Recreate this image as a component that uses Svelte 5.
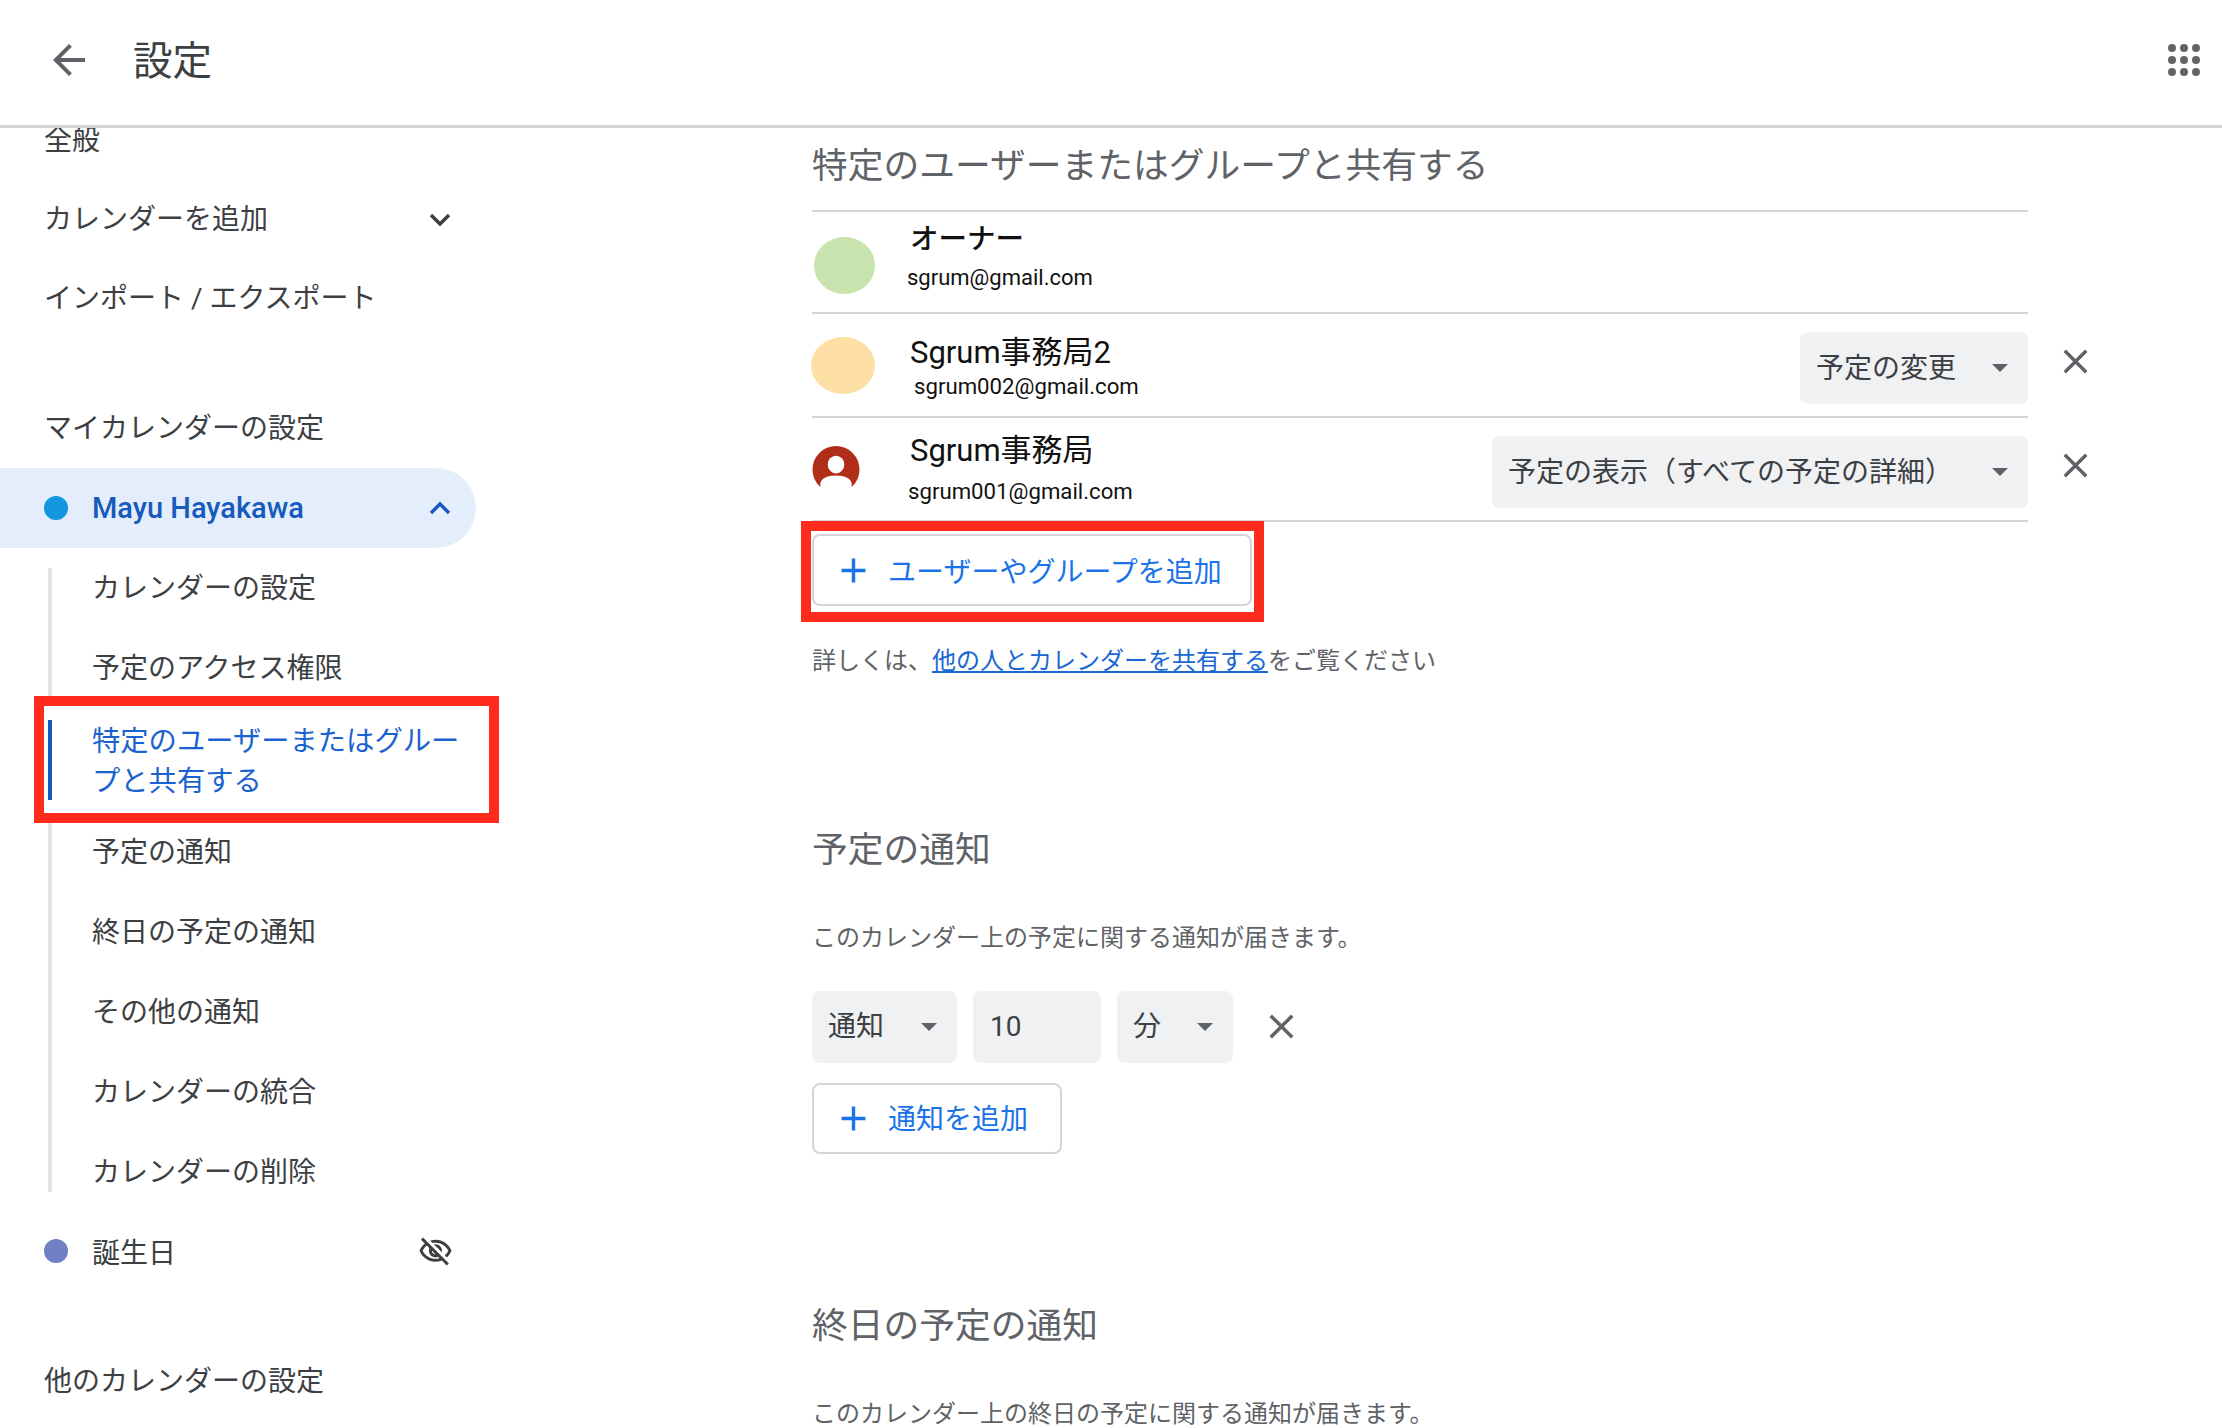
<script>
  const subItems = [
    { label: 'カレンダーの設定' },
    { label: '予定のアクセス権限' },
    { label: '特定のユーザーまたはグループと共有する', active: true },
    { label: '予定の通知' },
    { label: '終日の予定の通知' },
    { label: 'その他の通知' },
    { label: 'カレンダーの統合' },
    { label: 'カレンダーの削除' }
  ];
  const closePath = 'M19 6.41L17.59 5 12 10.59 6.41 5 5 6.41 10.59 12 5 17.59 6.41 19 12 13.41 17.59 19 19 17.59 13.41 12z';
  const addPath = 'M19 13h-6v6h-2v-6H5v-2h6V5h2v6h6v2z';
  const dots = [4, 16, 28];
</script>

<div class="page">
  <header class="topbar">
    <svg class="back" viewBox="0 0 24 24" aria-hidden="true"><path d="M20 11H7.83l5.59-5.59L12 4l-8 8 8 8 1.41-1.41L7.83 13H20v-2z" /></svg>
    <h1>設定</h1>
    <svg class="apps" viewBox="0 0 32 32" aria-hidden="true">
      {#each dots as y}
        {#each dots as x}
          <circle cx={x} cy={y} r="4" />
        {/each}
      {/each}
    </svg>
  </header>

  <div class="body">
    <nav class="side">
      <div class="nav-row">全般</div>
      <div class="nav-row add-cal">
        <span>カレンダーを追加</span>
        <svg class="chev" viewBox="0 0 24 16" aria-hidden="true"><path d="M3 3l9 9 9-9" /></svg>
      </div>
      <div class="nav-row">インポート / エクスポート</div>
      <div class="nav-row section-my">マイカレンダーの設定</div>
      <div class="nav-row cal current">
        <span class="dot blue"></span>
        <span class="cal-name">Mayu Hayakawa</span>
        <svg class="chev" viewBox="0 0 24 16" aria-hidden="true"><path d="M3 13l9-9 9 9" /></svg>
      </div>
      <ul class="sub">
        {#each subItems as item}
          <li class:active={item.active}>{item.label}</li>
        {/each}
      </ul>
      <div class="birthday">
        <span class="dot indigo"></span>
        <span>誕生日</span>
        <svg class="eye" viewBox="0 0 24 24" aria-hidden="true"><path d="M12 6c3.79 0 7.17 2.13 8.82 5.5-.59 1.22-1.42 2.27-2.41 3.12l1.41 1.41c1.39-1.23 2.49-2.77 3.18-4.53C21.27 7.11 17 4 12 4c-1.27 0-2.49.2-3.64.57l1.65 1.65C10.66 6.09 11.32 6 12 6zm-1.07 1.14L13 9.21c.57.25 1.03.71 1.28 1.28l2.07 2.07c.08-.34.14-.7.14-1.07C16.5 9.01 14.48 7 12 7c-.37 0-.72.05-1.07.14zM2.01 3.87l2.68 2.68C3.06 7.83 1.77 9.53 1 11.5 2.73 15.89 7 19 12 19c1.52 0 2.98-.29 4.32-.82l3.42 3.42 1.41-1.41L3.42 2.45 2.01 3.87zm7.5 7.5l2.61 2.61c-.04.01-.08.02-.12.02-1.38 0-2.5-1.12-2.5-2.5 0-.05.01-.08.01-.13zm-3.4-3.4l1.75 1.75c-.23.55-.36 1.15-.36 1.78 0 2.48 2.02 4.5 4.5 4.5.63 0 1.23-.13 1.77-.36l.98.98c-.88.24-1.8.38-2.75.38-3.79 0-7.17-2.13-8.82-5.5.7-1.43 1.72-2.61 2.93-3.53z" /></svg>
      </div>
      <div class="nav-row section-other">他のカレンダーの設定</div>
    </nav>

    <main class="content">
      <h2 class="h-share">特定のユーザーまたはグループと共有する</h2>
      <div class="people">
        <div class="person p1">
          <span class="avatar-slot"><span class="avatar green"></span></span>
          <div class="who">
            <div class="name owner">オーナー</div>
            <div class="mail">sgrum@gmail.com</div>
          </div>
        </div>
        <div class="person p2">
          <span class="avatar-slot"><span class="avatar yellow"></span></span>
          <div class="who">
            <div class="name">Sgrum事務局2</div>
            <div class="mail">sgrum002@gmail.com</div>
          </div>
          <div class="select perm w-change"><span>予定の変更</span><i class="caret"></i></div>
          <svg class="close" viewBox="0 0 24 24" aria-hidden="true"><path d={closePath} /></svg>
        </div>
        <div class="person p3">
          <span class="avatar-slot">
            <svg class="avatar-user" viewBox="0 0 48 48" aria-hidden="true">
              <circle cx="24" cy="24" r="24" fill="#b02e17" />
              <ellipse cx="24" cy="19" rx="8.5" ry="9" fill="#fff" />
              <path d="M8 48V39C8 33 15 30 24 30s16 3 16 9v9z" fill="#fff" />
            </svg>
          </span>
          <div class="who">
            <div class="name">Sgrum事務局</div>
            <div class="mail">sgrum001@gmail.com</div>
          </div>
          <div class="select perm w-view"><span>予定の表示（すべての予定の詳細）</span><i class="caret"></i></div>
          <svg class="close" viewBox="0 0 24 24" aria-hidden="true"><path d={closePath} /></svg>
        </div>
      </div>

      <button class="add add-user" type="button">
        <svg viewBox="0 0 24 24" aria-hidden="true"><path d={addPath} /></svg>
        <span>ユーザーやグループを追加</span>
      </button>

      <p class="help">詳しくは、<a href="#share">他の人とカレンダーを共有する</a>をご覧ください</p>

      <h2 class="h-notify">予定の通知</h2>
      <p class="desc">このカレンダー上の予定に関する通知が届きます。</p>
      <div class="notify-row">
        <div class="select w-type"><span>通知</span><i class="caret"></i></div>
        <div class="select w-num"><span class="num">10</span></div>
        <div class="select w-unit"><span>分</span><i class="caret"></i></div>
        <svg class="close" viewBox="0 0 24 24" aria-hidden="true"><path d={closePath} /></svg>
      </div>
      <button class="add add-notify" type="button">
        <svg viewBox="0 0 24 24" aria-hidden="true"><path d={addPath} /></svg>
        <span>通知を追加</span>
      </button>

      <h2 class="h-allday">終日の予定の通知</h2>
      <p class="desc">このカレンダー上の終日の予定に関する通知が届きます。</p>
    </main>
  </div>
</div>

<style>
  :global(body) {
    margin: 0;
    background: #fff;
  }
  .page {
    width: 2222px;
    height: 1428px;
    overflow: hidden;
    display: flex;
    flex-direction: column;
    font-family: Roboto, "Noto Sans CJK JP", sans-serif;
    color: #3c4043;
    font-size: 28px;
  }
  .topbar {
    flex: none;
    border-bottom: 3px solid #d3d4d7;
    display: flex;
    align-items: center;
    padding: 0 22px 5px 45px;
    box-sizing: content-box;
    height: 120px;
    background: #fff;
    position: relative;
    z-index: 2;
  }
  .back {
    width: 48px;
    height: 48px;
    fill: #5f6368;
  }
  h1 {
    margin: 3px 0 0 40px;
    font-size: 39.5px;
    font-weight: 400;
    line-height: 48px;
    color: #3c4043;
  }
  .apps {
    margin-left: auto;
    width: 32px;
    height: 32px;
    fill: #5f6368;
  }
  .body {
    flex: 1;
    min-height: 0;
    display: flex;
    overflow: hidden;
  }
  .side {
    flex: none;
    width: 520px;
    margin-top: -30.5px;
  }
  .nav-row {
    height: 80px;
    display: flex;
    align-items: center;
    padding-left: 44px;
    box-sizing: border-box;
    width: 476px;
    padding-right: 24px;
    justify-content: space-between;
  }
  .add-cal {
    height: 78.5px;
  }
  .add-cal .chev {
    margin-top: 6px;
  }
  .section-my {
    margin-top: 47.5px;
    height: 84.5px;
  }
  .section-other {
    margin-top: 68px;
  }
  .chev {
    width: 24px;
    height: 16px;
    fill: none;
    stroke: currentColor;
    stroke-width: 3.4;
  }
  .cal {
    justify-content: flex-start;
  }
  .current {
    height: 80px;
    background: #e3edfc;
    border-radius: 0 40px 40px 0;
    color: #185abc;
  }
  .current .chev {
    margin-left: auto;
  }
  .dot {
    flex: none;
    width: 24px;
    height: 24px;
    border-radius: 50%;
    margin-right: 24px;
  }
  .blue {
    background: #1296e0;
  }
  .indigo {
    background: #7080c4;
  }
  .cal-name {
    font-size: 29px;
    font-weight: 500;
  }
  .sub {
    list-style: none;
    margin: 20px 0 0 48px;
    padding: 0 0 0 40px;
    border-left: 4px solid #e3e4e8;
    display: flex;
    flex-direction: column;
    gap: 40px;
    width: 372px;
    box-sizing: content-box;
    line-height: 40px;
  }
  .sub li {
    height: 40px;
    line-height: 42.5px;
  }
  .sub li.active {
    height: 80px;
    margin: -8px 0;
    font-size: 28.3px;
    line-height: 40px;
    color: #1a62cf;
    position: relative;
    z-index: 1;
    box-sizing: border-box;
    padding-top: 1.5px;
  }
  .sub li.active::before {
    content: "";
    position: absolute;
    left: -58px;
    top: -24px;
    bottom: -23px;
    width: 465px;
    box-sizing: border-box;
    border: 10px solid #fe2a1c;
    background: #fff;
    z-index: -1;
  }
  .sub li.active::after {
    content: "";
    position: absolute;
    left: -44px;
    top: 0;
    bottom: 0;
    width: 4px;
    background: #185abc;
  }
  .birthday {
    margin-top: 39px;
    height: 40px;
    display: flex;
    align-items: center;
    padding-left: 44px;
  }
  .eye {
    width: 35px;
    height: 35px;
    fill: #3c4043;
    margin-left: auto;
    margin-right: 67px;
  }
  .content {
    flex: none;
    width: 1216px;
    margin-left: 292px;
    padding-top: 13.5px;
  }
  h2 {
    margin: 0;
    font-size: 35.75px;
    line-height: 48px;
    font-weight: 400;
    color: #5f6368;
  }
  .h-share {
    margin-bottom: 20.5px;
  }
  .people {
    border-top: 2px solid #d4d5da;
  }
  .person {
    display: flex;
    align-items: flex-start;
    border-bottom: 2px solid #d4d5da;
    height: 102px;
    box-sizing: border-box;
  }
  .person.p2,
  .person.p3 {
    height: 104px;
  }
  .avatar-slot {
    flex: none;
    width: 100px;
    display: block;
  }
  .avatar {
    display: block;
    border-radius: 50%;
  }
  .avatar.green {
    width: 61px;
    height: 57px;
    margin: 25px 0 0 2px;
    background: #c8e4ae;
  }
  .avatar.yellow {
    width: 64px;
    height: 57px;
    margin: 23px 0 0 -1px;
    background: #fedfa5;
  }
  .avatar-user {
    display: block;
    width: 48px;
    height: 47px;
    margin-top: 28px;
  }
  .name {
    font-size: 31px;
    line-height: 36px;
    color: #111;
    font-weight: 400;
    margin-left: -2px;
  }
  .name.owner {
    font-size: 28.5px;
    font-weight: 500;
  }
  .mail {
    font-size: 22px;
    line-height: 30px;
    color: #111;
  }
  .p1 .who {
    padding-top: 10px;
  }
  .p1 .mail {
    margin: 5px 0 0 -5px;
  }
  .p2 .who {
    padding-top: 21px;
  }
  .p2 .mail {
    margin: 0 0 0 2px;
    font-size: 22.2px;
  }
  .p3 .who {
    padding-top: 14.5px;
  }
  .p3 .mail {
    margin: 7.5px 0 0 -4px;
    font-size: 22.2px;
  }
  .select {
    flex: none;
    height: 72px;
    box-sizing: border-box;
    background: #f0f1f3;
    border-radius: 8px;
    display: flex;
    align-items: center;
    justify-content: space-between;
    padding: 0 20px 0 16px;
  }
  .select span {
    margin-top: -5px;
  }
  .select span.num {
    margin-top: 0;
  }
  .caret {
    flex: none;
    width: 0;
    height: 0;
    border-left: 8px solid transparent;
    border-right: 8px solid transparent;
    border-top: 8px solid #5f6368;
  }
  .perm {
    margin: 18px 0 0 auto;
  }
  .w-change {
    width: 228px;
  }
  .w-view {
    width: 536px;
  }
  .close {
    flex: none;
    width: 41px;
    height: 41px;
    fill: #5f6368;
  }
  .person .close {
    margin: 27px -68px 0 27px;
  }
  .add {
    position: relative;
    display: flex;
    align-items: center;
    box-sizing: border-box;
    padding: 0 0 0 19px;
    margin: 0;
    background: #fff;
    border: 2.5px solid #d4d5da;
    border-radius: 8px;
    font: inherit;
    color: #1a73e8;
  }
  .add svg {
    flex: none;
    width: 41px;
    height: 41px;
    fill: #1a73e8;
    margin-right: 14px;
  }
  .add-notify span {
    margin-top: -2px;
  }
  .add-user {
    width: 440px;
    height: 72px;
    margin-top: 12px;
  }
  .add-user::before {
    content: "";
    position: absolute;
    left: -13.5px;
    right: -13.5px;
    top: -15.5px;
    bottom: -17.5px;
    border: 10px solid #fe2a1c;
    pointer-events: none;
  }
  .add-notify {
    width: 250px;
    height: 71px;
    margin-top: 20px;
  }
  .help {
    margin: 37px 0 0;
    font-size: 24px;
    line-height: 36px;
    color: #5f6368;
  }
  .help a {
    color: #1967d2;
    text-decoration: underline;
  }
  .h-notify {
    margin-top: 146.5px;
  }
  .desc {
    margin: 46px 0 0;
    font-size: 24px;
    line-height: 36px;
    color: #5f6368;
  }
  .notify-row {
    display: flex;
    align-items: center;
    gap: 16px;
    margin-top: 35px;
  }
  .notify-row .close {
    margin-left: 12px;
  }
  .w-type {
    width: 145px;
  }
  .w-num {
    width: 128px;
    padding-left: 17px;
  }
  .w-unit {
    width: 116px;
  }
  .h-allday {
    margin-top: 148px;
  }
</style>
